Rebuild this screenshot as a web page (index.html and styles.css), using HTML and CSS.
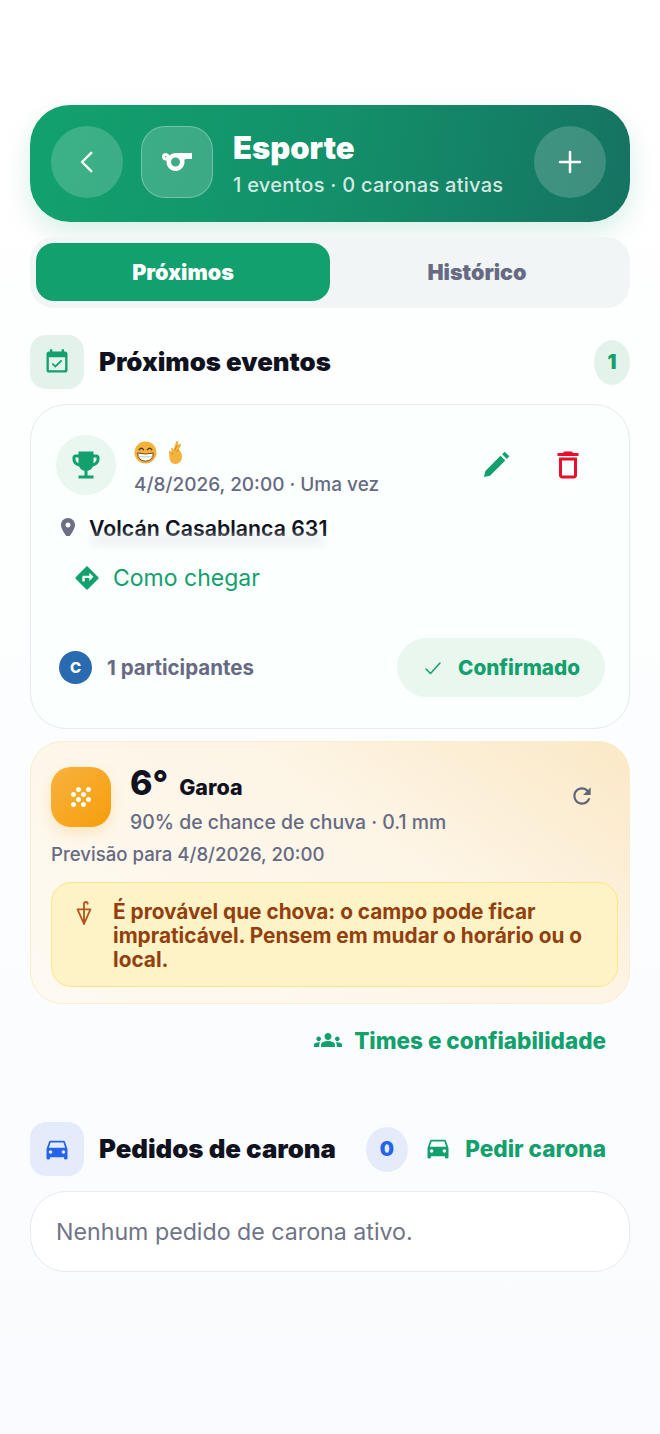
FILE: index.html
```html
<!DOCTYPE html>
<html lang="pt-BR">
<head>
  <meta charset="UTF-8">
  <title>Esporte</title>
  <link rel="stylesheet" href="styles.css">
</head>
<body>
  <header class="hero">
    <button class="round-btn">
      <svg width="34" height="34" viewBox="0 0 24 24" fill="none" stroke="#fff" stroke-width="1.7" stroke-linecap="round" stroke-linejoin="round"><path d="M15 5.500 8.500 12l6.500 6.500"/></svg>
    </button>
    <div class="hero-tile">
      <svg width="36" height="36" viewBox="0 0 24 24" fill="#fff"><path d="M11.230 6c-1.660 0-3.220.66-4.360 1.730C6.540 6.730 5.610 6 4.500 6 3.120 6 2 7.120 2 8.500S3.120 11 4.500 11c.21 0 .41-.03.61-.08-.05.25-.09.51-.1.78-.18 3.680 2.950 6.680 6.680 6.270 2.550-.28 4.680-2.260 5.190-4.770.15-.71.15-1.400.06-2.060-.09-.6.38-1.130.99-1.130H22V6H11.230zM4.500 9c-.28 0-.5-.22-.5-.5s.22-.5.5-.5.5.22.5.5-.22.5-.5.5zm6.500 6c-1.660 0-3-1.340-3-3s1.340-3 3-3 3 1.340 3 3-1.340 3-3 3z"/></svg>
    </div>
    <div class="hero-text">
      <div class="hero-title">Esporte</div>
      <div class="hero-sub">1 eventos · 0 caronas ativas</div>
    </div>
    <button class="round-btn">
      <svg width="30" height="30" viewBox="0 0 24 24" fill="none" stroke="#fff" stroke-width="2" stroke-linecap="round"><path d="M12 4v16M4 12h16"/></svg>
    </button>
  </header>

  <nav class="tabs">
    <div class="tab tab-active">Próximos</div>
    <div class="tab">Histórico</div>
  </nav>

  <section class="section-head head-events">
    <div class="head-icon icon-green">
      <svg width="28" height="28" viewBox="0 0 24 24" fill="#12a06c"><path d="M16.530 11.060 15.470 10l-4.880 4.880-2.120-2.120-1.060 1.060L10.590 17l5.940-5.940zM19 3h-1V1h-2v2H8V1H6v2H5c-1.110 0-1.990.9-1.990 2L3 19c0 1.100.89 2 2 2h14c1.100 0 2-.9 2-2V5c0-1.100-.9-2-2-2zm0 16H5V8h14v11z"/></svg>
    </div>
    <h2 class="head-title">Próximos eventos</h2>
    <div class="count count-green">1</div>
  </section>

  <article class="event-card">
    <div class="event-top">
      <div class="trophy">
        <svg width="36" height="36" viewBox="0 0 24 24" fill="#12a06c"><path d="M19 5h-2V3H7v2H5c-1.100 0-2 .9-2 2v1c0 2.550 1.920 4.630 4.390 4.940.63 1.500 1.980 2.630 3.610 2.960V19H7v2h10v-2h-4v-3.100c1.630-.33 2.980-1.460 3.610-2.960C19.080 12.630 21 10.550 21 8V7c0-1.100-.9-2-2-2zM5 8V7h2v3.820C5.840 10.400 5 9.300 5 8zm14 0c0 1.300-.84 2.400-2 2.820V7h2v1z"/></svg>
      </div>
      <div class="event-info">
        <div class="emojis">
          <svg width="23" height="23" viewBox="0 0 24 24"><circle cx="12" cy="12" r="11.500" fill="#f3b23c"/><path d="M5.500 9q2.200-3 4.400 0M14.100 9q2.200-3 4.400 0" fill="none" stroke="#5b3a12" stroke-width="1.500" stroke-linecap="round"/><path d="M3.800 12.500q8.200 2.200 16.400 0Q20 21 12 21t-8.200-8.500z" fill="#fff" stroke="#6b4313"/><path d="M4.800 16.500h14.400" stroke="#b9b2a6" stroke-width=".8"/></svg>
          <svg width="18" height="24" viewBox="0 0 18 24"><path d="M3 12.500c-.6-1.500 1.300-2.400 2.100-1.100l.6 1-.5-3.200c-.2-1.400 1.700-1.800 2.100-.4l.3 1.200L10 2c.5-1.500 2.500-1 2.300.6L11.600 5l1.600-1c1.300-.7 2.400.8 1.400 2l-1.900 3.500c1.900 1.500 3.300 4 3.300 7 0 4.500-2.700 7.500-6.500 7.500C5.500 24 3.600 21 3.600 17.500L3 12.500z" fill="#f3b23c"/><path d="M8.600 10.500 11 5M13 9.500l-2.500 1.800M6 12.500l.5 2" stroke="#c98418" stroke-width=".8" fill="none"/></svg>
        </div>
        <div class="event-date">4/8/2026, 20:00 · Uma vez</div>
      </div>
      <button class="icon-btn">
        <svg width="36" height="36" viewBox="0 0 24 24" fill="#12a06c"><path d="M4 20l.9-4L15 5.800 18.200 9 8 19.100 4 20zM16.100 4.800l1.700-1.700 3.100 3.100L19.200 8 16.100 4.800z"/></svg>
      </button>
      <button class="icon-btn">
        <svg width="36" height="36" viewBox="0 0 24 24" fill="#e8112d"><path d="M16 9v10H8V9h8m-1.500-6h-5l-1 1H5v2h14V4h-3.500l-1-1zM18 7H6v12c0 1.100.9 2 2 2h8c1.100 0 2-.9 2-2V7z"/></svg>
      </button>
    </div>

    <div class="location">
      <svg width="24" height="24" viewBox="0 0 24 24" fill="#6b7085"><path d="M12 2C8.130 2 5 5.130 5 9c0 5.250 7 13 7 13s7-7.750 7-13c0-3.870-3.130-7-7-7zm0 9.500c-1.380 0-2.500-1.120-2.500-2.500s1.120-2.500 2.500-2.500 2.500 1.120 2.500 2.500-1.120 2.500-2.500 2.500z"/></svg>
      <span class="location-text">Volcán Casablanca 631</span>
    </div>
    <div class="location-fade"></div>

    <div class="route">
      <svg width="28" height="28" viewBox="0 0 24 24" fill="#12a06c"><path d="M21.710 11.290l-9-9c-.39-.39-1.020-.39-1.410 0l-9 9c-.39.39-.39 1.020 0 1.410l9 9c.39.39 1.020.39 1.410 0l9-9c.39-.38.39-1.010 0-1.410zM14 14.500V12h-4v3H8v-4c0-.55.45-1 1-1h5V7.500l3.500 3.500-3.500 3.500z"/></svg>
      <span>Como chegar</span>
    </div>

    <div class="event-foot">
      <div class="avatar">C</div>
      <div class="participants">1 participantes</div>
      <div class="confirmed">
        <svg width="24" height="24" viewBox="0 0 24 24" fill="none" stroke="#12a06c" stroke-width="1.500" stroke-linecap="round" stroke-linejoin="round"><path d="M5 13l4.500 4.500L19 7"/></svg>
        <span>Confirmado</span>
      </div>
    </div>
  </article>

  <article class="weather-card">
    <div class="weather-top">
      <div class="weather-icon">
        <svg width="30" height="30" viewBox="0 0 24 24" fill="#fff"><path d="M10 12c-1.100 0-2 .9-2 2s.9 2 2 2 2-.9 2-2-.9-2-2-2zM6 8c-1.100 0-2 .9-2 2s.9 2 2 2 2-.9 2-2-.9-2-2-2zm0 8c-1.100 0-2 .9-2 2s.9 2 2 2 2-.9 2-2-.9-2-2-2zm12-8c1.100 0 2-.9 2-2s-.9-2-2-2-2 .9-2 2 .9 2 2 2zm-4 8c-1.100 0-2 .9-2 2s.9 2 2 2 2-.9 2-2-.9-2-2-2zm4-4c-1.100 0-2 .9-2 2s.9 2 2 2 2-.9 2-2-.9-2-2-2zm-4-4c-1.100 0-2 .9-2 2s.9 2 2 2 2-.9 2-2-.9-2-2-2zm-4-4c-1.100 0-2 .9-2 2s.9 2 2 2 2-.9 2-2-.9-2-2-2z"/></svg>
      </div>
      <div class="weather-main">
        <div class="weather-line">
          <span class="temp">6°</span>
          <span class="cond">Garoa</span>
        </div>
        <div class="weather-rain">90% de chance de chuva · 0.1 mm</div>
      </div>
      <svg class="refresh" width="26" height="26" viewBox="0 0 24 24" fill="#5f6478"><path d="M17.650 6.350C16.200 4.900 14.210 4 12 4c-4.420 0-7.990 3.580-7.990 8s3.570 8 7.990 8c3.730 0 6.840-2.550 7.730-6h-2.080c-.82 2.330-3.040 4-5.650 4-3.310 0-6-2.690-6-6s2.690-6 6-6c1.660 0 3.140.69 4.220 1.780L13 11h7V4l-2.350 2.350z"/></svg>
    </div>
    <div class="forecast">Previsão para 4/8/2026, 20:00</div>
    <div class="alert">
      <svg class="alert-icon" width="22" height="26" viewBox="0 0 24 28" fill="none" stroke="#b4551a" stroke-width="2" stroke-linecap="round" stroke-linejoin="round"><path d="M5 10h14L12 26 5 10zM12 10v16M12 10V4.500q0-2.500 2-2.500t2 2"/></svg>
      <p class="alert-text">É provável que chova: o campo pode ficar impraticável. Pensem em mudar o horário ou o local.</p>
    </div>
  </article>

  <div class="teams-link">
    <svg width="28" height="28" viewBox="0 0 24 24" fill="#12a06c"><path d="M12 12.750c1.630 0 3.070.39 4.240.9 1.080.48 1.760 1.560 1.760 2.730V18H6v-1.610c0-1.180.68-2.260 1.760-2.730 1.170-.52 2.610-.91 4.240-.91zM4 13c1.100 0 2-.9 2-2s-.9-2-2-2-2 .9-2 2 .9 2 2 2zm1.130 1.100c-.37-.06-.74-.1-1.130-.1-.99 0-1.930.21-2.780.58C.48 14.900 0 15.620 0 16.430V18h4.500v-1.610c0-.83.23-1.610.63-2.290zM20 13c1.100 0 2-.9 2-2s-.9-2-2-2-2 .9-2 2 .9 2 2 2zm4 3.430c0-.81-.48-1.530-1.220-1.850-.85-.37-1.790-.58-2.780-.58-.39 0-.76.04-1.130.1.4.68.63 1.460.63 2.290V18H24v-1.570zM12 6c1.660 0 3 1.340 3 3s-1.340 3-3 3-3-1.340-3-3 1.340-3 3-3z"/></svg>
    <span>Times e confiabilidade</span>
  </div>

  <section class="section-head head-rides">
    <div class="head-icon icon-blue">
      <svg width="28" height="28" viewBox="0 0 24 24" fill="#2563eb"><path d="M18.920 6.010C18.720 5.420 18.160 5 17.500 5h-11c-.66 0-1.210.42-1.420 1.010L3 12v8c0 .55.45 1 1 1h1c.55 0 1-.45 1-1v-1h12v1c0 .55.45 1 1 1h1c.55 0 1-.45 1-1v-8l-2.080-5.990zM6.500 16c-.83 0-1.500-.67-1.500-1.500S5.670 13 6.500 13s1.500.67 1.500 1.500S7.330 16 6.500 16zm11 0c-.83 0-1.500-.67-1.500-1.500s.67-1.500 1.500-1.500 1.500.67 1.500 1.500-.67 1.500-1.500 1.500zM5 11l1.500-4.500h11L19 11H5z"/></svg>
    </div>
    <h2 class="head-title">Pedidos de carona</h2>
    <div class="count count-blue">0</div>
    <div class="ride-link">
      <svg width="28" height="28" viewBox="0 0 24 24" fill="#12a06c"><path d="M18.920 6.010C18.720 5.420 18.160 5 17.500 5h-11c-.66 0-1.210.42-1.420 1.010L3 12v8c0 .55.45 1 1 1h1c.55 0 1-.45 1-1v-1h12v1c0 .55.45 1 1 1h1c.55 0 1-.45 1-1v-8l-2.080-5.990zM6.500 16c-.83 0-1.500-.67-1.500-1.500S5.670 13 6.500 13s1.500.67 1.500 1.500S7.330 16 6.500 16zm11 0c-.83 0-1.500-.67-1.500-1.500s.67-1.500 1.500-1.500 1.500.67 1.500 1.500-.67 1.500-1.500 1.500zM5 11l1.500-4.500h11L19 11H5z"/></svg>
      <span>Pedir carona</span>
    </div>
  </section>

  <div class="empty-card">Nenhum pedido de carona ativo.</div>
</body>
</html>
```
FILE: styles.css
```css
* { box-sizing: border-box; }

body {
  margin: 0;
  min-height: 1434px;
  padding: 105px 30px 0;
  font-family: Inter, "Liberation Sans", sans-serif;
  background: linear-gradient(180deg, #ffffff 0%, #fdfefe 35%, #fafbfe 100%);
  color: #10131f;
}

button {
  border: 0;
  padding: 0;
  background: none;
  display: flex;
  align-items: center;
  justify-content: center;
}

/* header */
.hero {
  display: flex;
  align-items: center;
  height: 117px;
  padding: 0 24px 3px 21px;
  border-radius: 40px;
  background: linear-gradient(100deg, #12a26e 0%, #13906a 50%, #157361 100%);
  box-shadow: 0 10px 24px rgba(18, 160, 108, .16);
}
.hero .round-btn {
  width: 72px;
  height: 72px;
  border-radius: 50%;
  background: rgba(255, 255, 255, .18);
  flex: none;
}
.hero-tile {
  width: 72px;
  height: 72px;
  margin-left: 18px;
  border-radius: 24px;
  background: rgba(255, 255, 255, .18);
  border: 1px solid rgba(255, 255, 255, .28);
  display: flex;
  align-items: center;
  justify-content: center;
  flex: none;
}
.hero-text { flex: 1; margin-left: 20px; padding-top: 1px; }
.hero-title {
  font-size: 31px;
  font-weight: 900;
  line-height: 38px;
  color: #fff;
}
.hero-sub {
  margin-top: 6px;
  font-size: 20px;
  letter-spacing: .26px;
  line-height: 24px;
  font-weight: 500;
  color: rgba(255, 255, 255, .84);
}

/* tabs */
.tabs {
  display: flex;
  height: 71px;
  margin-top: 15px;
  padding: 6px 6px 7px 6px;
  border-radius: 24px;
  background: #f1f5f5;
}
.tab {
  flex: 1;
  display: flex;
  align-items: center;
  justify-content: center;
  border-radius: 18px;
  font-size: 21.500px;
  font-weight: 900;
  color: #666a82;
}
.tab-active {
  background: #12a06f;
  color: #fff;
}

/* section titles */
.section-head {
  display: flex;
  align-items: center;
  height: 54px;
}
.head-events { margin-top: 27px; }
.head-rides { margin-top: 67px; }
.head-icon {
  width: 54px;
  height: 54px;
  border-radius: 16px;
  display: flex;
  align-items: center;
  justify-content: center;
  flex: none;
}
.icon-green { background: #e3f3ec; }
.icon-blue { background: #e4ecfb; }
.head-title {
  margin: 0 0 2px 15px;
  font-size: 25.800px;
  font-weight: 900;
  color: #10131f;
}
.count {
  height: 45px;
  border-radius: 50%;
  display: flex;
  align-items: center;
  justify-content: center;
  font-size: 20px;
  font-weight: 900;
}
.count-green {
  width: 36px;
  margin-left: auto;
  background: #e3f3ec;
  color: #12a06c;
}
.count-blue {
  width: 42px;
  margin-left: 30px;
  background: #e4ecfb;
  color: #2563eb;
}
.ride-link {
  margin-left: auto;
  margin-right: 24px;
  margin-bottom: 2px;
  display: flex;
  align-items: center;
  gap: 13px;
  font-size: 22.600px;
  font-weight: 800;
  color: #12a06c;
}

/* event */
.event-card {
  height: 325px;
  margin-top: 15px;
  padding: 30px 24px 0 25px;
  border: 1.500px solid #e6ebee;
  border-radius: 36px;
  background: #fbfffe;
}
.event-top {
  display: flex;
  align-items: flex-start;
}
.trophy {
  width: 60px;
  height: 60px;
  border-radius: 50%;
  background: #e9f7f0;
  display: flex;
  align-items: center;
  justify-content: center;
  flex: none;
}
.event-info { flex: 1; margin-left: 18px; padding-top: 3px; }
.emojis {
  display: flex;
  align-items: center;
  gap: 9px;
  height: 28px;
}
.event-date {
  margin-top: 7px;
  font-size: 19px;
  line-height: 24px;
  font-weight: 500;
  color: #666a82;
}
.icon-btn {
  width: 36px;
  height: 36px;
  margin-left: 36px;
  margin-top: 12px;
  flex: none;
}
.icon-btn:last-child { margin-right: 19px; }

.location {
  display: flex;
  align-items: flex-start;
  gap: 9px;
  height: 20px;
  margin: 19px 0 0 0;
  overflow: hidden;
}
.location-text {
  font-size: 21.300px;
  line-height: 24px;
  font-weight: 600;
  color: #10131f;
}
.location-fade {
  width: 232px;
  height: 8px;
  margin: 0 0 0 36px;
  background: #e4e8ea;
  filter: blur(4px);
  opacity: .7;
}
.route {
  display: flex;
  align-items: center;
  gap: 12px;
  margin: 20px 0 0 17px;
  font-size: 23px;
  color: #12a06c;
}

.event-foot {
  display: flex;
  align-items: center;
  margin-top: 46px;
}
.avatar {
  width: 33px;
  height: 33px;
  margin-left: 3px;
  border-radius: 50%;
  background: #2a6ab0;
  color: #fff;
  font-size: 15px;
  font-weight: 800;
  display: flex;
  align-items: center;
  justify-content: center;
}
.participants {
  flex: 1;
  margin-left: 15px;
  font-size: 20.500px;
  font-weight: 700;
  color: #666a82;
}
.confirmed {
  width: 208px;
  height: 59px;
  padding-left: 24px;
  border-radius: 30px;
  background: #e9f7ef;
  display: flex;
  align-items: center;
  gap: 13px;
  font-size: 20.700px;
  font-weight: 800;
  color: #12a06c;
}

/* weather */
.weather-card {
  height: 263px;
  margin-top: 12px;
  padding: 25px 11px 0 20px;
  border: 1.500px solid #fbeccf;
  border-radius: 32px;
  background: linear-gradient(215deg, #fbe8c6 0%, #fdf5e6 40%, #fefaf2 100%);
}
.weather-top { display: flex; align-items: flex-start; }
.weather-icon {
  width: 60px;
  height: 60px;
  border-radius: 20px;
  background: linear-gradient(135deg, #f9b23e, #f59e0b);
  box-shadow: 0 6px 14px rgba(245, 158, 11, .2);
  display: flex;
  align-items: center;
  justify-content: center;
  flex: none;
}
.weather-main { flex: 1; margin-left: 19px; }
.weather-line { display: flex; align-items: baseline; gap: 11px; height: 40px; margin-top: -4px; }
.temp { font-size: 34px; line-height: 40px; font-weight: 800; }
.cond { font-size: 21.500px; font-weight: 800; }
.weather-rain {
  margin-top: 7px;
  font-size: 19.400px;
  line-height: 24px;
  font-weight: 500;
  color: #666a82;
}
.refresh { margin: 16px 23px 0 0; }
.forecast {
  margin-top: 8px;
  font-size: 18.600px;
  line-height: 24px;
  font-weight: 500;
  color: #666a82;
}
.alert {
  display: flex;
  align-items: flex-start;
  gap: 18px;
  height: 105px;
  margin-top: 16px;
  padding: 17px 14px 0 21px;
  border: 1.500px solid #fde68a;
  border-radius: 20px;
  background: #fef3c7;
}
.alert-icon { flex: none; }
.alert-text {
  margin: 0;
  font-size: 20.800px;
  line-height: 24px;
  font-weight: 700;
  color: #92400e;
}

.teams-link {
  display: flex;
  justify-content: flex-end;
  align-items: center;
  gap: 12px;
  margin: 21px 24px 0 0;
  height: 30px;
  font-size: 22.500px;
  font-weight: 800;
  color: #12a06c;
}

.empty-card {
  display: flex;
  align-items: center;
  height: 81px;
  margin-top: 15px;
  padding-left: 25px;
  border: 1.500px solid #e6ebee;
  border-radius: 36px;
  background: #fff;
  font-size: 23.200px;
  color: #6f7488;
}
```
